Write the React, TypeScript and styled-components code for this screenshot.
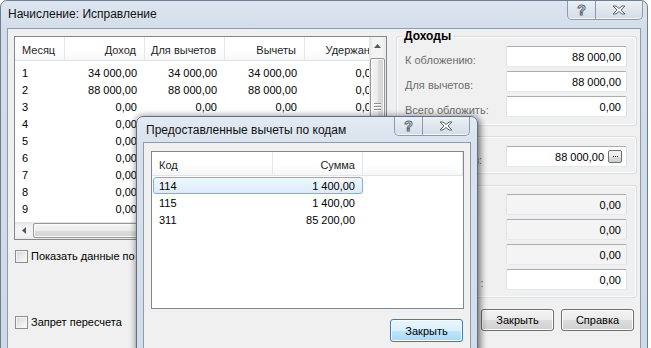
import React from 'react';
import styled, { createGlobalStyle } from 'styled-components';

const GlobalStyle = createGlobalStyle`
  html, body {
    margin: 0;
    padding: 0;
    background: #ffffff;
    overflow: hidden;
  }
  body {
    font-family: "Liberation Sans", Arial, sans-serif;
    font-size: 11px;
    color: #000;
  }
  * {
    box-sizing: border-box;
  }
`;

const Stage = styled.div`
  position: relative;
  width: 651px;
  height: 348px;
  overflow: hidden;
`;

/* ---------- window chrome ---------- */

const Frame = styled.div`
  width: 648px;
  height: 362px;
  border: 1px solid #6e7f93;
  border-radius: 7px 7px 0 0;
  background: linear-gradient(#dde5ef, #d3dde9 30px, #cfdae7);
  display: flex;
  flex-direction: column;
  padding: 0 6px;
`;

const TitleBar = styled.div`
  height: 27px;
  display: flex;
  align-items: flex-start;
  justify-content: space-between;
`;

const Title = styled.div`
  font-size: 12px;
  line-height: 27px;
  padding-left: 1px;
  color: #111;
`;

const CaptionGroup = styled.div<{ $top?: number; $right?: number }>`
  display: flex;
  margin-top: ${(p) => p.$top ?? 0}px;
  margin-right: ${(p) => p.$right ?? 0}px;
  height: 19px;
  border: 1px solid #8c9aab;
  border-top: none;
  border-radius: 0 0 5px 5px;
  overflow: hidden;
  background: linear-gradient(#edf1f6, #dfe6ee 50%, #d4dde8);
  box-shadow: inset 0 -1px 0 #f4f7fa;
`;

const CaptionButton = styled.div<{ $w: number }>`
  width: ${(p) => p.$w}px;
  height: 100%;
  display: flex;
  align-items: center;
  justify-content: center;
  & + & {
    border-left: 1px solid #8c9aab;
  }
`;

const HelpGlyph = styled.span`
  font-family: "Liberation Sans", Arial, sans-serif;
  font-weight: bold;
  font-size: 14px;
  line-height: 14px;
  color: #ffffff;
  -webkit-text-stroke: 1px #5a6576;
`;

const Client = styled.div`
  flex: 1;
  border: 1px solid #8e9bab;
  background: #f0f0f0;
  display: flex;
  align-items: flex-start;
`;

/* ---------- left part: monthly table ---------- */

const LeftColumn = styled.div`
  width: 379px;
  padding: 7px 0 0 6px;
  display: flex;
  flex-direction: column;
`;

const ListBox = styled.div<{ $w: number; $h: number }>`
  width: ${(p) => p.$w}px;
  height: ${(p) => p.$h}px;
  border: 1px solid #828790;
  background: #fff;
  display: grid;
  grid-template-columns: 1fr 17px;
  grid-template-rows: 1fr 17px;
  overflow: hidden;
`;

const Viewport = styled.div`
  overflow: hidden;
  min-width: 0;
`;

const HeaderRow = styled.div<{ $cols: string }>`
  display: grid;
  grid-template-columns: ${(p) => p.$cols};
  height: 24px;
  background: linear-gradient(#ffffff, #ffffff 55%, #f6f7f9);
  border-bottom: 1px solid #e0e3e7;
`;

const HeaderCell = styled.div<{ $right?: boolean; $pr?: number }>`
  display: flex;
  align-items: center;
  justify-content: ${(p) => (p.$right ? 'flex-end' : 'flex-start')};
  padding: 3px ${(p) => p.$pr ?? 8}px 0 7px;
  border-right: 1px solid #e5e7ea;
  white-space: nowrap;
  overflow: hidden;
  color: #1e1e1e;
`;

const Rows = styled.div<{ $cols: string; $top: number }>`
  display: grid;
  grid-template-columns: ${(p) => p.$cols};
  grid-auto-rows: 17px;
  margin-top: ${(p) => p.$top}px;
`;

const Cell = styled.div<{ $right?: boolean; $pr?: number; $pl?: number }>`
  display: flex;
  align-items: center;
  justify-content: ${(p) => (p.$right ? 'flex-end' : 'flex-start')};
  padding: 0 ${(p) => p.$pr ?? 8}px 0 ${(p) => p.$pl ?? 7}px;
  white-space: nowrap;
  overflow: hidden;
`;

const VScroll = styled.div`
  display: flex;
  flex-direction: column;
  background: linear-gradient(90deg, #e4e4e4, #f3f3f3 25%, #f3f3f3 75%, #e9e9e9);
`;

const HScroll = styled.div`
  display: flex;
  align-items: stretch;
  background: linear-gradient(#e4e4e4, #f3f3f3 25%, #f3f3f3 75%, #e9e9e9);
`;

const Corner = styled.div`
  background: #f0f0f0;
`;

const ArrowBox = styled.div`
  width: 17px;
  height: 17px;
  display: flex;
  align-items: center;
  justify-content: center;
  flex-shrink: 0;
`;

const VThumb = styled.div`
  margin: 4px 1px 0 1px;
  height: 98px;
  border: 1px solid #979797;
  border-radius: 2px;
  background: linear-gradient(90deg, #f4f4f4, #ececec 50%, #dcdcdc 51%, #d4d4d4);
  box-shadow: inset 0 0 0 1px #fbfbfb;
  display: flex;
  flex-direction: column;
  align-items: center;
  justify-content: center;
  gap: 1px;
`;

const HThumb = styled.div`
  margin: 1px 0 1px 1px;
  width: 240px;
  border: 1px solid #979797;
  border-radius: 2px;
  background: linear-gradient(#f4f4f4, #ececec 50%, #dcdcdc 51%, #d4d4d4);
  box-shadow: inset 0 0 0 1px #fbfbfb;
`;

const GripLine = styled.div`
  width: 7px;
  height: 1px;
  background: #8f8f8f;
  box-shadow: 0 1px 0 #ffffff;
  margin-bottom: 1px;
`;

const CheckRow = styled.label<{ $top: number }>`
  display: flex;
  align-items: center;
  gap: 3px;
  margin: ${(p) => p.$top}px 0 0 1px;
  line-height: 13px;
  white-space: nowrap;
`;

const CheckBox = styled.span`
  width: 13px;
  height: 13px;
  border: 1px solid #8e8f8f;
  background: linear-gradient(135deg, #d7d7d7, #f6f6f6 80%);
  box-shadow: inset 0 0 0 1px #f3f3f3;
  flex-shrink: 0;
`;

/* ---------- right part: groups ---------- */

const RightColumn = styled.div`
  width: 241px;
  margin-left: 9px;
  padding-top: 1px;
  display: flex;
  flex-direction: column;
`;

const Group = styled.fieldset<{ $pt: number; $pb: number; $mt?: number }>`
  margin: ${(p) => p.$mt ?? 0}px 0 0 0;
  padding: ${(p) => p.$pt}px 9px ${(p) => p.$pb}px 8px;
  border: 1px solid #d5dfe5;
  border-radius: 3px;
  box-shadow: inset 0 0 0 1px #fbfcfd;
  display: flex;
  flex-direction: column;
  gap: 4px;
  min-width: 0;
`;

const Legend = styled.legend`
  margin-left: -3px;
  padding: 0 2px;
  font-weight: bold;
  font-size: 12px;
  line-height: 13px;
  color: #000;
`;

const FieldRow = styled.div`
  display: flex;
  align-items: flex-start;
  height: 21px;
`;

const FieldLabel = styled.div`
  flex: 1;
  padding-top: 8px;
  line-height: 13px;
  color: #6d6d6d;
  white-space: nowrap;
`;

const Field = styled.div<{ $disabled?: boolean }>`
  width: 121px;
  height: 21px;
  flex-shrink: 0;
  border: 1px solid;
  border-color: #abadb3 #dbdfe6 #e3e9ef #e2e3ea;
  border-radius: 2px;
  background: ${(p) => (p.$disabled ? '#f4f4f4' : '#ffffff')};
  display: flex;
  align-items: center;
  justify-content: flex-end;
  padding-right: 5px;
  gap: 4px;
`;

const DotsButton = styled.span`
  width: 14px;
  height: 13px;
  margin-right: -1px;
  border: 1px solid #707070;
  border-radius: 2px;
  background: linear-gradient(#f2f2f2, #ebebeb 50%, #dddddd 51%, #cfcfcf);
  display: flex;
  align-items: center;
  justify-content: center;
  gap: 1px;
`;

const Dot = styled.span`
  width: 1px;
  height: 1px;
  background: #000;
`;

const ButtonRow = styled.div<{ $mt: number; $pr: number }>`
  display: flex;
  justify-content: flex-end;
  gap: 7px;
  margin-top: ${(p) => p.$mt}px;
  padding-right: ${(p) => p.$pr}px;
`;

const Button = styled.div<{ $default?: boolean }>`
  width: 73px;
  height: ${(p) => (p.$default ? 23 : 22)}px;
  border: 1px solid ${(p) => (p.$default ? '#3c7fb1' : '#707070')};
  border-radius: 3px;
  background: ${(p) =>
    p.$default
      ? 'linear-gradient(#eaf6fd, #d9f0fc 50%, #bee6fd 51%, #a7d9f5)'
      : 'linear-gradient(#f2f2f2, #ebebeb 50%, #dddddd 51%, #cfcfcf)'};
  box-shadow: inset 0 0 0 1px ${(p) => (p.$default ? '#f5fbfe' : '#fcfcfc')};
  display: flex;
  align-items: center;
  justify-content: center;
  color: #000;
`;

/* ---------- dialog ---------- */

const Dialog = styled.div`
  position: absolute;
  left: 136px;
  top: 116px;
  width: 342px;
  height: 250px;
  border: 1px solid #5f7187;
  border-radius: 7px 7px 0 0;
  background: linear-gradient(#e3eaf3, #d8e1ec 30px, #d3dde9);
  box-shadow: 0 0 6px 1px rgba(0, 0, 0, 0.3), 3px 3px 7px rgba(0, 0, 0, 0.35);
  display: flex;
  flex-direction: column;
  padding: 0 6px;
`;

const DialogTitleBar = styled(TitleBar)`
  height: 25px;
`;

const DialogTitle = styled(Title)`
  line-height: 27px;
  padding-left: 3px;
`;

const DialogClient = styled.div`
  flex: 1;
  border: 1px solid #8e9bab;
  background: #f0f0f0;
  padding: 8px 6px 0 7px;
  display: flex;
  flex-direction: column;
`;

const DialogList = styled.div`
  height: 158px;
  border: 1px solid #828790;
  background: #fff;
`;

const CodeRows = styled.div`
  padding-top: 1px;
`;

const SelRow = styled.div<{ $selected?: boolean }>`
  display: grid;
  grid-template-columns: 121px 89px;
  height: 17px;
  margin-left: 1px;
  width: 210px;
  border: 1px solid ${(p) => (p.$selected ? '#84acdd' : 'transparent')};
  border-radius: 3px;
  background: ${(p) => (p.$selected ? 'linear-gradient(#f1f7fe, #dcebfc)' : 'transparent')};
`;

const UpArrow = () => (
  <svg width="7" height="4" viewBox="0 0 7 4">
    <polygon points="0,4 3.5,0 7,4" fill="#4e5a68" />
  </svg>
);

const LeftArrow = () => (
  <svg width="4" height="7" viewBox="0 0 4 7">
    <polygon points="4,0 0,3.5 4,7" fill="#4e5a68" />
  </svg>
);

const CloseGlyph = () => (
  <svg width="14" height="10" viewBox="0 0 14 10">
    <polygon
      points="1,1 4,1 7,3.5 10,1 13,1 9,5 13,9 10,9 7,6.5 4,9 1,9 5,5"
      fill="#ffffff"
      stroke="#56606e"
      strokeWidth="1"
      strokeLinejoin="round"
    />
  </svg>
);

const Caption = ({ top, right }: { top?: number; right?: number }) => (
  <CaptionGroup $top={top} $right={right}>
    <CaptionButton $w={27}>
      <HelpGlyph>?</HelpGlyph>
    </CaptionButton>
    <CaptionButton $w={47}>
      <CloseGlyph />
    </CaptionButton>
  </CaptionGroup>
);

const monthCols = '50px 80px 80px 80px 80px';

const months: string[][] = [
  ['1', '34 000,00', '34 000,00', '34 000,00', '0,00'],
  ['2', '88 000,00', '88 000,00', '88 000,00', '0,00'],
  ['3', '0,00', '0,00', '0,00', '0,00'],
  ['4', '0,00', '0,00', '0,00', '0,00'],
  ['5', '0,00', '0,00', '0,00', '0,00'],
  ['6', '0,00', '0,00', '0,00', '0,00'],
  ['7', '0,00', '0,00', '0,00', '0,00'],
  ['8', '0,00', '0,00', '0,00', '0,00'],
  ['9', '0,00', '0,00', '0,00', '0,00'],
  ['10', '0,00', '0,00', '0,00', '0,00'],
  ['11', '0,00', '0,00', '0,00', '0,00'],
  ['12', '0,00', '0,00', '0,00', '0,00'],
];

const codes = [
  { code: '114', sum: '1 400,00' },
  { code: '115', sum: '1 400,00' },
  { code: '311', sum: '85 200,00' },
];

export default function App() {
  return (
    <Stage>
      <GlobalStyle />
      <Frame>
        <TitleBar>
          <Title>Начисление: Исправление</Title>
          <Caption top={0} right={-2} />
        </TitleBar>
        <Client>
          <LeftColumn>
            <ListBox $w={373} $h={204}>
              <Viewport>
                <HeaderRow $cols={monthCols}>
                  <HeaderCell>Месяц</HeaderCell>
                  <HeaderCell $right>Доход</HeaderCell>
                  <HeaderCell $right>Для вычетов</HeaderCell>
                  <HeaderCell $right>Вычеты</HeaderCell>
                  <HeaderCell $right>Удержано</HeaderCell>
                </HeaderRow>
                <Rows $cols={monthCols} $top={3}>
                  {months.map((m) =>
                    m.map((v, i) => (
                      <Cell key={m[0] + '-' + i} $right={i > 0}>
                        {v}
                      </Cell>
                    ))
                  )}
                </Rows>
              </Viewport>
              <VScroll>
                <ArrowBox>
                  <UpArrow />
                </ArrowBox>
                <VThumb>
                  <GripLine />
                  <GripLine />
                  <GripLine />
                </VThumb>
              </VScroll>
              <HScroll>
                <ArrowBox>
                  <LeftArrow />
                </ArrowBox>
                <HThumb />
              </HScroll>
              <Corner />
            </ListBox>
            <CheckRow $top={10}>
              <CheckBox />
              Показать данные по месяцам
            </CheckRow>
            <CheckRow $top={53}>
              <CheckBox />
              Запрет пересчета
            </CheckRow>
          </LeftColumn>

          <RightColumn>
            <Group $pt={3} $pb={8}>
              <Legend>Доходы</Legend>
              <FieldRow>
                <FieldLabel>К обложению:</FieldLabel>
                <Field>88 000,00</Field>
              </FieldRow>
              <FieldRow>
                <FieldLabel>Для вычетов:</FieldLabel>
                <Field>88 000,00</Field>
              </FieldRow>
              <FieldRow>
                <FieldLabel>Всего обложить:</FieldLabel>
                <Field>0,00</Field>
              </FieldRow>
            </Group>
            <Group $pt={9} $pb={6} $mt={10}>
              <FieldRow>
                <FieldLabel>Всего вычетов:</FieldLabel>
                <Field>
                  88 000,00
                  <DotsButton>
                    <Dot />
                    <Dot />
                    <Dot />
                  </DotsButton>
                </Field>
              </FieldRow>
            </Group>
            <Group $pt={8} $pb={7} $mt={11}>
              <FieldRow>
                <FieldLabel>Исчислено:</FieldLabel>
                <Field $disabled>0,00</Field>
              </FieldRow>
              <FieldRow>
                <FieldLabel>Удержано:</FieldLabel>
                <Field $disabled>0,00</Field>
              </FieldRow>
              <FieldRow>
                <FieldLabel>Перечислено:</FieldLabel>
                <Field $disabled>0,00</Field>
              </FieldRow>
              <FieldRow>
                <FieldLabel>Сумма налога :</FieldLabel>
                <Field>0,00</Field>
              </FieldRow>
            </Group>
            <ButtonRow $mt={11} $pr={3}>
              <Button>Закрыть</Button>
              <Button>Справка</Button>
            </ButtonRow>
          </RightColumn>
        </Client>
      </Frame>

      <Dialog>
        <DialogTitleBar>
          <DialogTitle>Предоставленные вычеты по кодам</DialogTitle>
          <Caption top={0} right={1} />
        </DialogTitleBar>
        <DialogClient>
          <DialogList>
            <HeaderRow $cols="121px 90px 1fr">
              <HeaderCell>Код</HeaderCell>
              <HeaderCell $right $pr={7}>Сумма</HeaderCell>
              <HeaderCell />
            </HeaderRow>
            <CodeRows>
              {codes.map((c, i) => (
                <SelRow key={c.code} $selected={i === 0}>
                  <Cell $pl={5}>{c.code}</Cell>
                  <Cell $right $pr={9}>{c.sum}</Cell>
                </SelRow>
              ))}
            </CodeRows>
          </DialogList>
          <ButtonRow $mt={10} $pr={1}>
            <Button $default>Закрыть</Button>
          </ButtonRow>
        </DialogClient>
      </Dialog>
    </Stage>
  );
}
